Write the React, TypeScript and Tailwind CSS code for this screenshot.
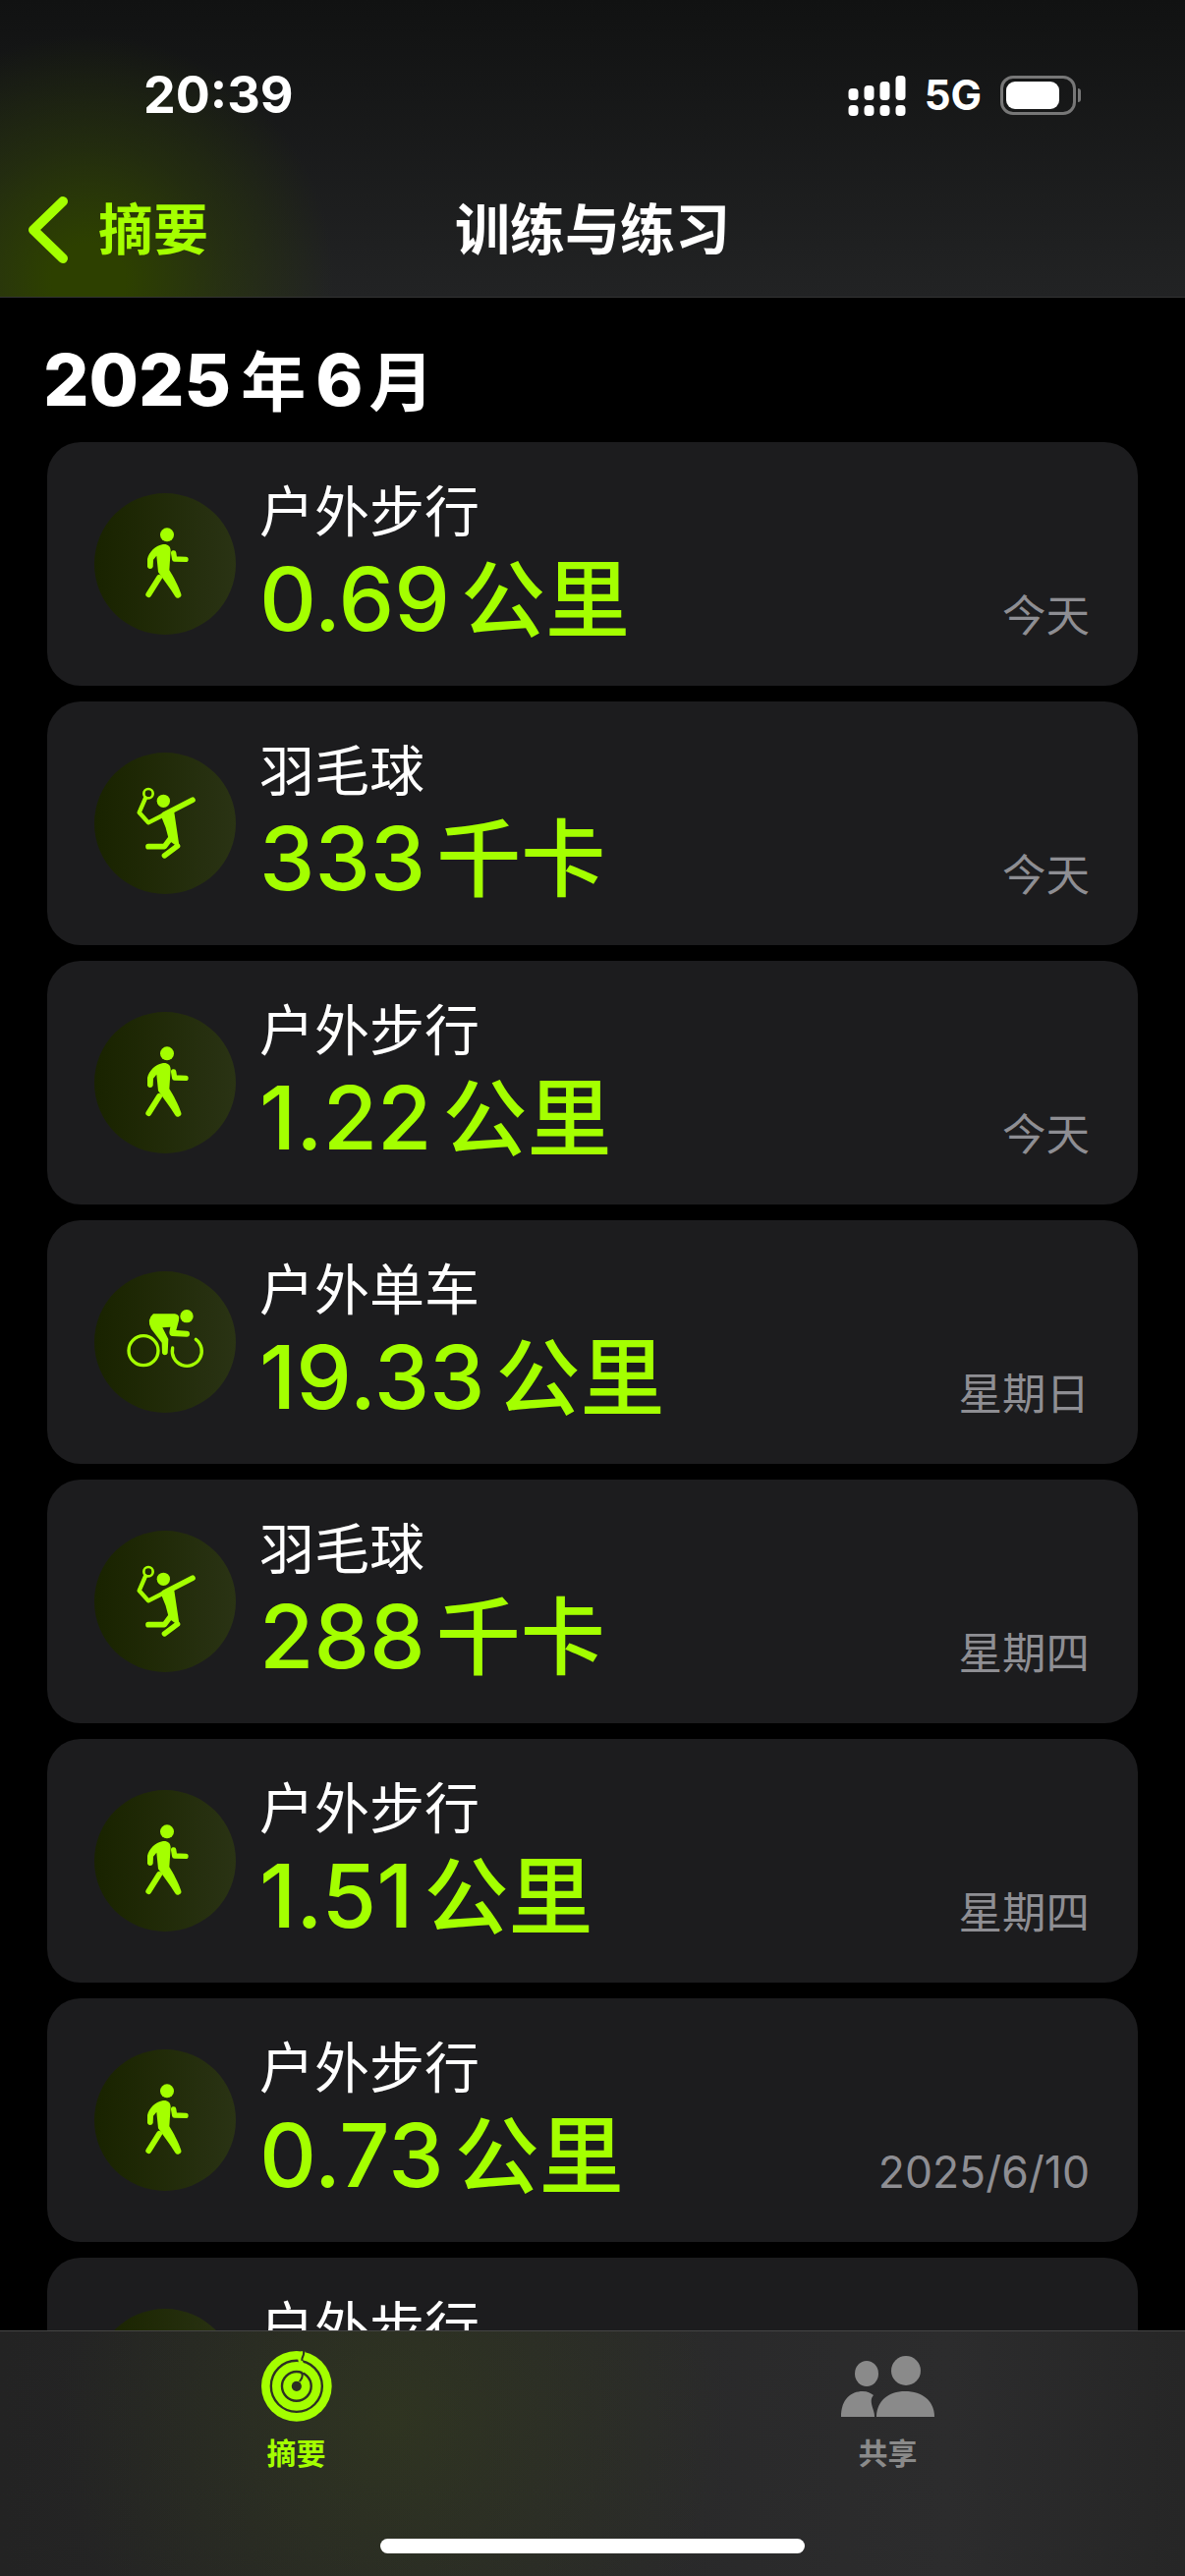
const FONT = "font-['Inter','Noto_Sans_CJK_SC',sans-serif]";

type Kind = "walk" | "badminton" | "bike";

type Workout = { kind: Kind; name: string; amount?: string; unit?: string; date?: string };

const WORKOUTS: Workout[] = [
  { kind: "walk", name: "户外步行", amount: "0.69", unit: "公里", date: "今天" },
  { kind: "badminton", name: "羽毛球", amount: "333", unit: "千卡", date: "今天" },
  { kind: "walk", name: "户外步行", amount: "1.22", unit: "公里", date: "今天" },
  { kind: "bike", name: "户外单车", amount: "19.33", unit: "公里", date: "星期日" },
  { kind: "badminton", name: "羽毛球", amount: "288", unit: "千卡", date: "星期四" },
  { kind: "walk", name: "户外步行", amount: "1.51", unit: "公里", date: "星期四" },
  { kind: "walk", name: "户外步行", amount: "0.73", unit: "公里", date: "2025/6/10" },
  // cut off by the tab bar
  { kind: "walk", name: "户外步行" },
];

function WalkIcon() {
  return (
    <svg viewBox="18 35 432 432" className="w-full h-full" fill="#a4ff00">
      <circle cx="240" cy="162" r="21" />
      <path d="M225 192C240 189 251 197 251 210L247 270C260 290 275 320 282 340A10 10 0 0 1 264 349C250 325 228 298 213 276L208 226L198 238L197 260A9 9 0 0 1 180 260L180 236C185 215 205 195 225 192Z" />
      <path d="M216 293L184 344" stroke="#a4ff00" strokeWidth="18" strokeLinecap="round" fill="none" />
      <path d="M260 218L263 236L297 237" stroke="#a4ff00" strokeWidth="16" strokeLinecap="round" strokeLinejoin="round" fill="none" />
    </svg>
  );
}

function BadmintonIcon() {
  return (
    <svg viewBox="18 33 432 432" className="w-full h-full" fill="none" stroke="#a4ff00" strokeLinecap="round" strokeLinejoin="round">
      <circle cx="183" cy="158" r="14" strokeWidth="8" />
      <path d="M174 172L155 216L183 247L232 222" strokeWidth="13" />
      <path d="M232 222L318 178" strokeWidth="17" />
      <circle cx="229" cy="181" r="20" fill="#a4ff00" stroke="none" />
      <path d="M228 232L258 216L273 316L250 300L240 262Z" fill="#a4ff00" strokeWidth="8" />
      <path d="M272 318L232 348" strokeWidth="16" />
      <path d="M250 296L232 320L183 320" strokeWidth="17" />
    </svg>
  );
}

function BikeIcon() {
  return (
    <svg viewBox="18 28 432 432" className="w-full h-full" fill="none" stroke="#a4ff00" strokeLinecap="round" strokeLinejoin="round">
      <circle cx="168" cy="270" r="45" strokeWidth="10" />
      <path d="M328 236A45 45 0 1 1 257 262" strokeWidth="10" />
      <circle cx="300" cy="165" r="20" fill="#a4ff00" stroke="none" />
      <path d="M198 158L264 158Q280 160 276 178L268 208L300 210A9 9 0 0 1 300 228L255 226Q247 224 247 214L250 198L226 200L244 235L242 278A9 9 0 0 1 225 278L224 246L192 204Q176 176 198 158Z" fill="#a4ff00" stroke="none" />
    </svg>
  );
}

function WorkoutIcon({ kind }: { kind: Kind }) {
  return (
    <div className="w-[144px] h-[144px] shrink-0 rounded-full bg-gradient-to-r from-[#192300] to-[#2a3314]">
      {kind === "walk" && <WalkIcon />}
      {kind === "badminton" && <BadmintonIcon />}
      {kind === "bike" && <BikeIcon />}
    </div>
  );
}

function WorkoutCard({ kind, name, amount, unit, date }: Workout) {
  return (
    <div className="h-[248px] shrink-0 rounded-[34px] bg-[#1c1c1e] pl-[48px] pr-[49px] flex items-center">
      <WorkoutIcon kind={kind} />
      <div className="ml-[24px] flex-1 flex flex-col">
        <div className="mt-[2px] text-[56px] leading-[62px] text-white">{name}</div>
        <div className="h-[100px] mt-[8px] flex items-baseline font-medium text-[#a4ff00]">
          <span className="text-[90px] leading-[100px]">{amount}</span>
          <span className="ml-[11px] text-[86px] leading-[100px]">{unit}</span>
        </div>
      </div>
      {date && <div className="self-end mb-[46px] text-[44.5px] leading-[50px] text-[#8e8e93]">{date}</div>}
    </div>
  );
}

function StatusBar() {
  return (
    <div className="h-[116px] pt-[78px] pl-[146px] pr-[106px] flex items-center justify-between">
      <span className="text-[52px] leading-[58px] font-bold text-white">20:39</span>
      <div className="flex items-center">
        <svg width="59" height="41" viewBox="0 0 58 41" fill="white">
          <rect x="0" y="13" width="10" height="12" rx="4" />
          <rect x="16" y="10" width="10" height="15" rx="4" />
          <rect x="32" y="6" width="10" height="19" rx="4" />
          <rect x="48" y="0" width="10" height="25" rx="4" />
          <rect x="0" y="30" width="10" height="11" rx="4" />
          <rect x="16" y="30" width="10" height="11" rx="4" />
          <rect x="32" y="30" width="10" height="11" rx="4" />
          <rect x="48" y="30" width="10" height="11" rx="4" />
        </svg>
        <span className="ml-[19px] text-[42px] leading-[46px] font-bold text-white">5G</span>
        <div className="ml-[19px] w-[77px] h-[40px] rounded-[13px] border-[3px] border-[#777] p-[3px]">
          <div className="w-[54px] h-full rounded-[9px] bg-white" />
        </div>
        <div className="ml-[2px] w-[3px] h-[14px] rounded-r-full bg-[#777]" />
      </div>
    </div>
  );
}

function NavBar() {
  return (
    <div className="h-[186px] pt-[50px] grid grid-cols-3 items-center">
      <div className="flex items-center pl-[27px]">
        <svg width="44" height="68" viewBox="0 0 44 68" fill="none" stroke="#a4ff00" strokeWidth="10" strokeLinecap="round" strokeLinejoin="round">
          <path d="M37 5L7 34L37 63" />
        </svg>
        <span className="ml-[29px] text-[56px] leading-[60px] font-semibold text-[#a4ff00]">摘要</span>
      </div>
      <div className="-mx-[8px] text-center text-[56px] leading-[60px] font-bold text-white whitespace-nowrap">训练与练习</div>
    </div>
  );
}

function RingsIcon() {
  return (
    <svg width="72" height="72" viewBox="105 72 213 213">
      <circle cx="211" cy="178" r="106" fill="#a4ff00" />
      <circle cx="211" cy="178" r="77" fill="none" stroke="#2c3023" strokeWidth="7" />
      <circle cx="211" cy="178" r="44" fill="none" stroke="#2c3023" strokeWidth="7" />
      <circle cx="211" cy="178" r="15" fill="#2c3023" />
      <path d="M230 73C232 88 218 90 222 101C226 112 236 122 226 134" fill="none" stroke="#a4ff00" strokeWidth="12" />
      <path d="M232 72C236 88 224 90 228 101" fill="none" stroke="#2c3023" strokeWidth="6" />
      <path d="M224 134C236 150 222 160 220 164" fill="none" stroke="#2c3023" strokeWidth="6" />
    </svg>
  );
}

function PeopleIcon() {
  return (
    <svg width="96" height="62" viewBox="0 0 96 62" fill="#8a8a8a">
      <ellipse cx="26" cy="18" rx="12" ry="13" />
      <circle cx="66" cy="15" r="15" />
      <path d="M0 62C0 44 10 36 22 36C27 36 30 38 33 40C27 46 35 56 34 62Z" />
      <path d="M36 62C36 46 48 36 65 36C83 36 95 46 95 62Z" />
    </svg>
  );
}

function TabBar() {
  return (
    <div className="absolute left-0 right-0 bottom-0 h-[250px] border-t border-[#454545] bg-[radial-gradient(circle_340px_at_400px_90px,rgba(70,90,15,0.26),transparent),linear-gradient(to_right,#232323,#2c2c2d_80%,#262626)]">
      <div className="grid grid-cols-2 pt-[20px]">
        <div className="flex flex-col items-center">
          <div className="h-[72px] flex items-end">
            <RingsIcon />
          </div>
          <span className="mt-[14px] text-[30px] leading-[36px] font-bold text-[#a4ff00]">摘要</span>
        </div>
        <div className="flex flex-col items-center pr-[2px]">
          <div className="h-[72px] flex items-end pb-[5px]">
            <PeopleIcon />
          </div>
          <span className="mt-[14px] text-[30px] leading-[36px] font-bold text-[#8a8a8a]">共享</span>
        </div>
      </div>
      <div className="mt-[69px] mx-auto w-[432px] h-[15px] rounded-full bg-white" />
    </div>
  );
}

export default function App() {
  return (
    <div className={`${FONT} relative h-[2622px] overflow-hidden bg-black flex flex-col`}>
      <div className="h-[303px] shrink-0 border-b border-[#333] bg-[radial-gradient(circle_250px_at_90px_285px,#2d4000_15%,rgba(45,64,0,0.45)_55%,transparent),linear-gradient(to_bottom,#111212,#222324)]">
        <StatusBar />
        <NavBar />
      </div>
      <div className="h-[80px] mt-[44px] pl-[44px] flex items-baseline font-bold text-white">
        <span className="text-[73px] leading-[80px] font-extrabold">2025</span>
        <span className="ml-[10px] text-[66px] leading-[80px]">年</span>
        <span className="ml-[10px] text-[73px] leading-[80px] font-extrabold">6</span>
        <span className="ml-[6px] text-[66px] leading-[80px]">月</span>
      </div>
      <div className="mt-[23px] mx-[48px] flex flex-col gap-[16px]">
        {WORKOUTS.map((w, i) => (
          <WorkoutCard key={i} {...w} />
        ))}
      </div>
      <TabBar />
    </div>
  );
}
